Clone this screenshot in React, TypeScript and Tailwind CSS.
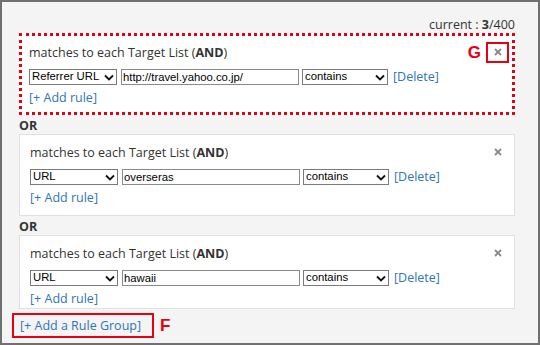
import React from "react";

const Chevron = () => (
  <svg width="10" height="7" viewBox="0 0 10 7" className="shrink-0">
    <polyline points="1,1.5 5,5.5 9,1.5" fill="none" stroke="#111" strokeWidth="1.8" />
  </svg>
);

const CloseX = () => (
  <svg width="8" height="8" viewBox="0 0 8 8">
    <line x1="1" y1="1" x2="7" y2="7" stroke="#8a8a8a" strokeWidth="1.8" />
    <line x1="7" y1="1" x2="1" y2="7" stroke="#8a8a8a" strokeWidth="1.8" />
  </svg>
);

type RuleProps = { field: string; value: string };

const RuleRow = ({ field, value }: RuleProps) => (
  <div className="flex items-center h-[16px] mt-[8px]">
    <div className="w-[88px] h-[16px] border border-[#7a7a7a] bg-white flex items-center justify-between pl-[2px] pr-[2px] text-[11.3px] font-['Liberation_Sans',Arial,sans-serif] text-black leading-none">
      <span>{field}</span>
      <Chevron />
    </div>
    <input
      readOnly
      value={value}
      className="ml-[4px] w-[178px] h-[16px] border border-[#8a8a8a] bg-white px-[1px] text-[11.3px] font-['Liberation_Sans',Arial,sans-serif] text-black leading-none outline-none"
    />
    <div className="ml-[3px] w-[86px] h-[16px] border border-[#7a7a7a] bg-white flex items-center justify-between pl-[2px] pr-[2px] text-[11.3px] font-['Liberation_Sans',Arial,sans-serif] text-black leading-none">
      <span>contains</span>
      <Chevron />
    </div>
    <span className="ml-[5px] text-[12.5px] leading-[16px] text-[#2f74b5]">[Delete]</span>
  </div>
);

type GroupProps = {
  field: string;
  value: string;
  highlighted?: boolean;
  last?: boolean;
};

const Group = ({ field, value, highlighted, last }: GroupProps) => (
  <div
    className={
      highlighted
        ? "bg-white border-[3px] border-dotted border-[#e60012] pl-[7px] pr-[3px] pt-[9px] pb-[6px]"
        : last
        ? "bg-white border border-[#e0e0e0] pl-[10px] pr-[5px] pt-[10px] pb-[1px]"
        : "bg-white border border-[#e0e0e0] pl-[10px] pr-[5px] pt-[10px] pb-[9px]"
    }
  >
    <div className="flex items-center justify-between h-[16px]">
      <span className="text-[12.5px] leading-[16px] text-[#333]">
        matches to each Target List (<b>AND</b>)
      </span>
      <div className="flex items-center relative top-[-1px]">
        {highlighted && (
          <span className="mr-[5px] text-[17px] font-bold leading-none text-[#e60012] font-['Liberation_Sans',Arial,sans-serif]">
            G
          </span>
        )}
        <div
          className={
            highlighted
              ? "w-[23px] h-[21px] border-2 border-[#e60012] flex items-center justify-center"
              : "w-[23px] h-[21px] border-2 border-transparent flex items-center justify-center"
          }
        >
          <CloseX />
        </div>
      </div>
    </div>
    <RuleRow field={field} value={value} />
    <div className="mt-[5px] h-[16px] text-[12.5px] leading-[16px] text-[#2f74b5]">[+ Add rule]</div>
  </div>
);

const OrLabel = () => (
  <div className="mt-[3px] h-[16px] leading-[16px] text-[12.5px] font-bold text-[#333]">OR</div>
);

export default function App() {
  return (
    <div className="w-[540px] h-[345px] border-2 border-[#707070] bg-[#f4f4f4] pl-[17px] pr-[23px] pt-[15px] overflow-hidden font-['Open_Sans',sans-serif]">
      <div className="flex justify-end h-[16px] leading-[16px] text-[12.5px] text-[#333]">
        <span>
          current : <b>3</b>/400
        </span>
      </div>
      <Group field="Referrer URL" value="http://travel.yahoo.co.jp/" highlighted />
      <OrLabel />
      <Group field="URL" value="overseras" />
      <OrLabel />
      <Group field="URL" value="hawaii" last />
      <div className="flex items-center mt-[4px]">
        <div className="ml-[-7px] w-[142px] h-[25px] border-2 border-[#e60012] flex items-center pl-[6px]">
          <span className="text-[12.5px] leading-[16px] text-[#2f74b5]">[+ Add a Rule Group]</span>
        </div>
        <span className="ml-[6px] text-[17px] font-bold leading-none text-[#e60012] font-['Liberation_Sans',Arial,sans-serif]">
          F
        </span>
      </div>
    </div>
  );
}
